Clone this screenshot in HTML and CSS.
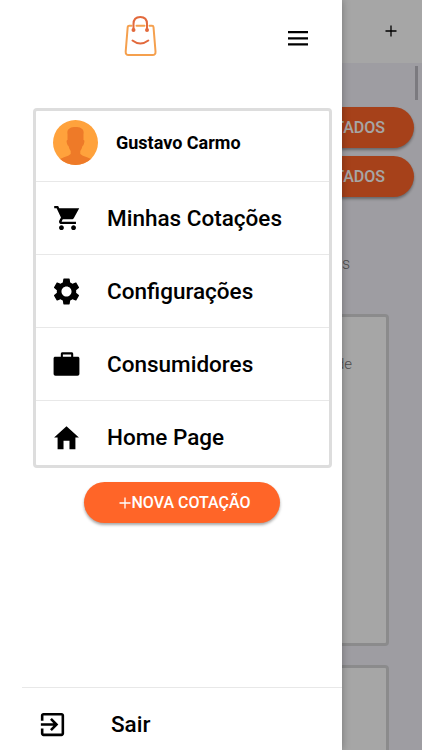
FILE: index.html
```html
<!DOCTYPE html>
<html lang="pt-BR">
<head>
  <meta charset="UTF-8">
  <meta name="viewport" content="width=device-width, initial-scale=1.0">
  <title>Cotações</title>
  <link rel="stylesheet" href="styles.css">
</head>
<body>
  <div class="page">
    <header class="page-header">
      <svg class="plus" viewBox="0 0 12 12"><path d="M6 .5v11M.5 6h11"/></svg>
    </header>
    <main class="page-content">
      <div class="page-actions">
        <button class="btn">CONTRATADOS</button>
        <button class="btn">CONTRATADOS</button>
      </div>
      <p class="page-subtitle">Últimas cotações enviadas</p>
      <div class="quote-card"><p>Plano de saúde</p></div>
      <div class="quote-card"></div>
    </main>
  </div>
  <div class="scrim"></div>
  <div class="scrollbar"></div>

  <aside class="drawer">
    <div class="drawer-top">
      <svg class="logo" viewBox="0 0 34 42">
        <path class="bag" d="M7.500 10.700H5.200Q3.900 10.700 3.700 12L1.700 36.500Q1.500 40 4.500 40H28.500Q31.800 40 31.500 36.500L29.500 12Q29.400 10.700 28 10.700H25.500M12.500 10.700H20.500"/>
        <path class="handle" d="M9.500 15V9Q9.500 2 16.300 2Q23 2 23 9V15M8.500 25.500Q16.300 31.500 24.300 25.500"/>
        <circle class="dot" cx="9.500" cy="15" r="1"/>
        <circle class="dot" cx="23" cy="15" r="1"/>
      </svg>
      <svg class="menu-icon" viewBox="0 0 20 15"><path d="M0 1.200h20M0 7.300h20M0 13.400h20"/></svg>
    </div>

    <nav class="menu">
      <div class="menu-user">
        <svg class="avatar" viewBox="0 0 45 45">
          <defs><clipPath id="face"><circle cx="22.500" cy="22.500" r="22.500"/></clipPath></defs>
          <g clip-path="url(#face)">
            <rect width="45" height="45" fill="#ffa23c"/>
            <path fill="#ee7a28" d="M14.500 14C13.500 8.500 18 7 22.500 7S31.500 8.500 30.500 14V20Q32 20 31 23.500Q30.500 25.500 29.500 26Q28.800 29 27.300 31V34Q29 36 34 37.300Q38 38.300 40 41V46H5V41Q7 38.300 11 37.300Q16 36 17.700 34V31Q16.200 29 15.500 26Q14.500 25.500 14 23.500Q13 20 14.500 20Z"/>
          </g>
        </svg>
        <span class="user-name">Gustavo Carmo</span>
      </div>
      <a class="menu-item">
        <svg class="icon icon-cart" viewBox="0 0 24 24"><path d="M7 18c-1.100 0-1.990.900-1.990 2S5.900 22 7 22s2-.900 2-2-.900-2-2-2zM1 2v2h2l3.600 7.590-1.350 2.450c-.160.280-.250.610-.250.960 0 1.100.900 2 2 2h12v-2H7.420c-.140 0-.250-.110-.250-.250l.030-.120.900-1.630h7.450c.750 0 1.410-.410 1.750-1.030L21.700 4H5.210l-.940-2H1zm16 16c-1.100 0-1.990.900-1.990 2s.890 2 1.990 2 2-.900 2-2-.900-2-2-2z"/></svg>
        <span>Minhas Cotações</span>
      </a>
      <a class="menu-item">
        <svg class="icon" viewBox="0 0 24 24"><path d="M19.430 12.980c.040-.320.070-.640.070-.980s-.030-.660-.070-.980l2.110-1.650c.190-.150.240-.420.120-.640l-2-3.460c-.120-.220-.390-.300-.610-.220l-2.490 1c-.520-.400-1.080-.730-1.690-.980l-.380-2.650C14.460 2.180 14.250 2 14 2h-4c-.250 0-.460.180-.490.420l-.380 2.650c-.610.250-1.170.590-1.690.980l-2.490-1c-.230-.090-.490 0-.610.220l-2 3.460c-.130.220-.070.490.120.640l2.110 1.650c-.040.320-.070.650-.070.980s.030.660.070.980l-2.110 1.650c-.190.150-.240.420-.120.640l2 3.460c.120.220.390.300.610.220l2.490-1c.520.400 1.080.730 1.690.980l.380 2.650c.030.240.240.420.490.420h4c.250 0 .460-.180.490-.420l.380-2.650c.610-.250 1.170-.590 1.690-.980l2.490 1c.230.090.490 0 .610-.220l2-3.460c.120-.220.070-.490-.120-.640l-2.110-1.650zM12 15.900c-2.150 0-3.900-1.750-3.900-3.900s1.750-3.900 3.900-3.900 3.900 1.750 3.900 3.900-1.750 3.900-3.900 3.900z"/></svg>
        <span>Configurações</span>
      </a>
      <a class="menu-item">
        <svg class="icon" viewBox="0 0 24 24"><path fill-rule="evenodd" d="M20.700 6h-3.500V3.900c0-.800-.500-1.300-1.300-1.300H8.900c-.800 0-1.300.500-1.300 1.300V6H3.300C2.500 6 2 6.500 2 7.300v11.900c0 .900.600 1.500 1.500 1.500h17c.900 0 1.500-.600 1.500-1.500V7.300c0-.800-.500-1.300-1.300-1.300zM9.200 6V4.200h6.400V6z"/></svg>
        <span>Consumidores</span>
      </a>
      <a class="menu-item">
        <svg class="icon" viewBox="0 0 24 24"><path d="M9.700 21v-6.500h4.600V21h4.600v-9H21.600L12 3.200 2.400 12h2.700v9z"/></svg>
        <span>Home Page</span>
      </a>
    </nav>

    <button class="btn btn-new"><svg class="plus" viewBox="0 0 12 12"><path d="M6 .5v11M.5 6h11"/></svg>NOVA COTAÇÃO</button>

    <a class="logout">
      <svg class="icon" viewBox="0 0 24 24"><path d="M10.090 15.590L11.500 17l5-5-5-5-1.410 1.410L12.670 11H3v2h9.670l-2.580 2.590zM19 3H5c-1.110 0-2 .900-2 2v4h2V5h14v14H5v-4H3v4c0 1.100.890 2 2 2h14c1.100 0 2-.900 2-2V5c0-1.100-.900-2-2-2z"/></svg>
      <span>Sair</span>
    </a>
  </aside>
</body>
</html>
```
FILE: styles.css
```css
* {
  box-sizing: border-box;
}
body {
  margin: 0;
  height: 750px;
  position: relative;
  overflow: hidden;
  font-family: Roboto, Arial, sans-serif;
  color: #000;
}
p {
  margin: 0;
}
.page {
  height: 750px;
  overflow: hidden;
  background: #f3f2f9;
}
.page-header {
  height: 63px;
  padding: 0 25px 1px 0;
  background: #fff;
  display: flex;
  align-items: center;
  justify-content: flex-end;
}
.plus {
  width: 12px;
  height: 12px;
  fill: none;
  stroke: currentColor;
  stroke-width: 1.3;
}
.page-content {
  padding: 44px 8px 0 33px;
}
.page-actions {
  display: flex;
  flex-direction: column;
  align-items: flex-end;
  gap: 8px;
}
.btn {
  width: 196px;
  height: 41px;
  border: 0;
  border-radius: 21px;
  padding: 0;
  background: #ff6528;
  color: #fff;
  font: 500 16px Roboto, Arial, sans-serif;
  box-shadow: 0 2px 3px rgba(0, 0, 0, 0.35);
}
.page-actions .btn {
  padding-right: 29px;
  text-align: right;
}
.page-subtitle {
  margin: 57px 64px 40px 0;
  line-height: 20px;
  font-size: 16px;
  font-weight: 300;
  text-align: right;
  color: #777;
}
.quote-card {
  width: 356px;
  height: 332px;
  margin-bottom: 19px;
  padding: 38px 34px;
  border: 3px solid #d6d6d8;
  border-radius: 4px;
  background: #fff;
  font-size: 15px;
  font-weight: 300;
  text-align: right;
  color: #777;
}
.scrim {
  position: absolute;
  inset: 0;
  background: rgba(0, 0, 0, 0.35);
}
.scrollbar {
  position: absolute;
  top: 66px;
  right: 4px;
  width: 3px;
  height: 34px;
  background: #7b7a7f;
}

.drawer {
  position: absolute;
  top: 0;
  left: 0;
  width: 342px;
  height: 750px;
  background: #fff;
  box-shadow: 0 0 8px rgba(0, 0, 0, 0.3);
  display: flex;
  flex-direction: column;
}
.drawer-top {
  height: 108px;
  padding: 15px 34px 0 124px;
  display: flex;
  justify-content: space-between;
}
.logo {
  width: 34px;
  height: 42px;
  fill: none;
  stroke-width: 2;
  stroke-linecap: round;
}
.bag {
  stroke: #f5a04e;
}
.handle {
  stroke: #e2693c;
}
.dot {
  stroke: #e2693c;
}
.menu-icon {
  width: 20px;
  height: 15px;
  margin-top: 16px;
  stroke: #000;
  stroke-width: 2.2;
}

.menu {
  width: 299px;
  height: 360px;
  margin-left: 33px;
  border: 3px solid #ddd;
  border-radius: 4px;
  overflow: hidden;
}
.menu-user,
.menu-item {
  display: flex;
  align-items: center;
  height: 73px;
  border-bottom: 1px solid #e8e8e8;
}
.menu-user {
  height: 71px;
  padding: 0 0 8px 17px;
}
.avatar {
  width: 45px;
  height: 45px;
  margin-right: 18px;
}
.user-name {
  font-size: 18px;
  font-weight: 700;
}
.menu-item {
  padding-left: 15px;
  font-size: 22.5px;
  font-weight: 500;
}
.icon {
  width: 31px;
  height: 31px;
  margin-right: 25px;
}
.icon-cart {
  padding: 0 0 1px 2px;
}
.btn-new {
  margin: 14px 0 0 84px;
  padding-left: 6px;
  display: flex;
  align-items: center;
  justify-content: center;
  flex-shrink: 0;
}
.logout {
  height: 63px;
  margin: auto 0 0 22px;
  padding: 10px 0 0 15px;
  border-top: 1px solid #e8e8e8;
  display: flex;
  align-items: center;
  font-size: 22.5px;
  font-weight: 500;
}
.logout .icon {
  margin-right: 43px;
}
.logout span {
  padding-bottom: 1px;
}
```
